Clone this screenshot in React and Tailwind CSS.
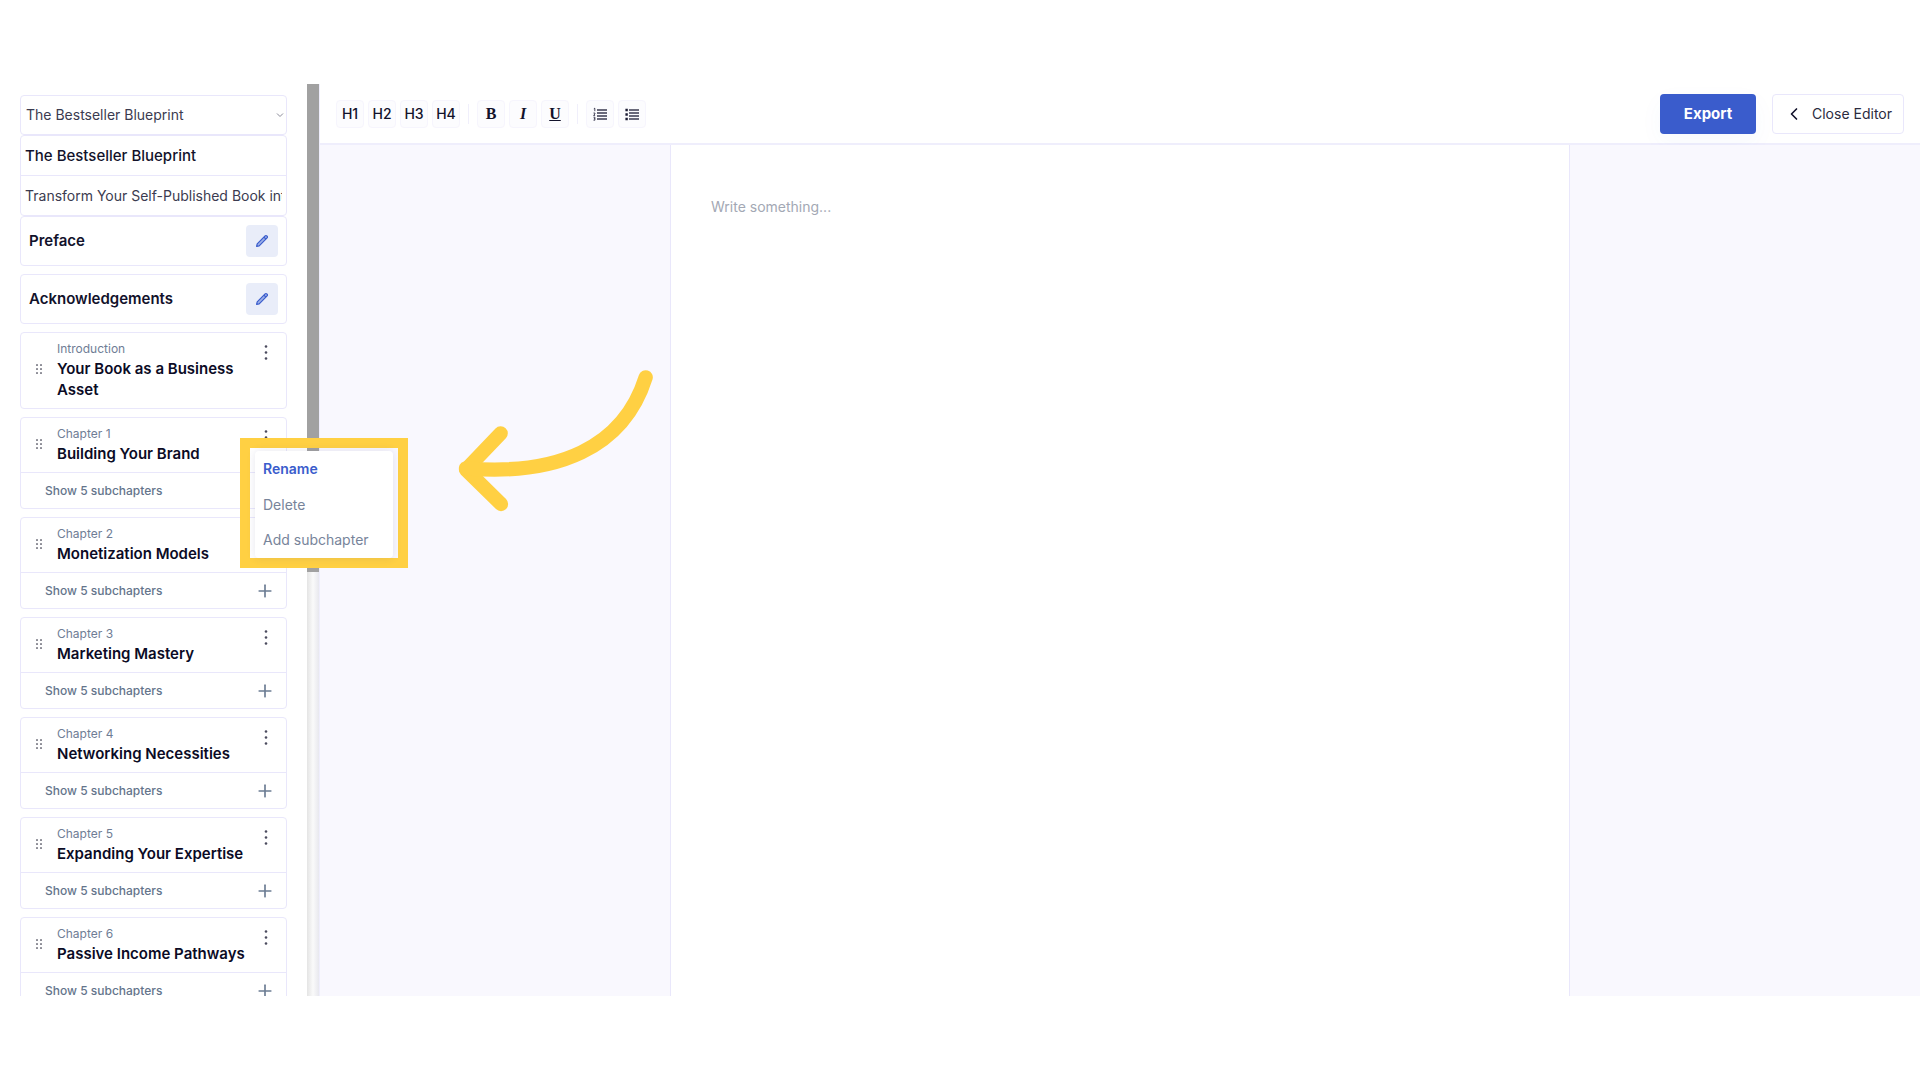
import React from 'react';
import { ChevronLeft, Plus } from 'lucide-react';

const headings = ['H1', 'H2', 'H3', 'H4'];

const chapters = [
  { label: 'Introduction', title: 'Your Book as a Business Asset' },
  { label: 'Chapter 1', title: 'Building Your Brand', subchapters: 5 },
  { label: 'Chapter 2', title: 'Monetization Models', subchapters: 5 },
  { label: 'Chapter 3', title: 'Marketing Mastery', subchapters: 5 },
  { label: 'Chapter 4', title: 'Networking Necessities', subchapters: 5 },
  { label: 'Chapter 5', title: 'Expanding Your Expertise', subchapters: 5 },
  { label: 'Chapter 6', title: 'Passive Income Pathways', subchapters: 5 },
];

const GripIcon = () => (
  <svg width="8" height="12" viewBox="0 0 8 12" fill="#85858f" aria-hidden="true">
    {[0, 4, 8].map((y) => (
      <React.Fragment key={y}>
        <rect x="1" y={y} width="2" height="2" rx="0.4" />
        <rect x="5" y={y} width="2" height="2" rx="0.4" />
      </React.Fragment>
    ))}
  </svg>
);

const DotsIcon = () => (
  <svg width="4" height="18" viewBox="0 0 4 18" fill="#4b4b5e" aria-hidden="true">
    <circle cx="2" cy="3.5" r="1.3" />
    <circle cx="2" cy="9.5" r="1.3" />
    <circle cx="2" cy="15.5" r="1.3" />
  </svg>
);

const PencilIcon = () => (
  <svg width="14" height="14" viewBox="0 0 14 14" fill="none" aria-hidden="true">
    <path
      d="M1.6 12.4l.6-2.6 7.9-7.9a1.2 1.2 0 0 1 1.7 0l.3.3a1.2 1.2 0 0 1 0 1.7l-7.9 7.9z"
      fill="#9db0e8"
      stroke="#3a5ccc"
      strokeWidth="1.2"
      strokeLinejoin="round"
    />
    <path d="M8.9 3.1l2 2" stroke="#3a5ccc" strokeWidth="1.2" />
  </svg>
);

const OrderedListIcon = () => (
  <svg width="14" height="14" viewBox="0 0 14 14" aria-hidden="true">
    <path d="M4 3h10M4 6h10M4 9h10M4 12h10" stroke="#3a3a50" strokeWidth="1.6" />
    <path d="M.8 1.8l1-.6v3M.5 6h1.4v1L.6 8.4h1.5M.5 10.2h1.4v3H.5M.9 11.7h1" fill="none" stroke="#1b1b33" strokeWidth="0.8" />
  </svg>
);

const BulletListIcon = () => (
  <svg width="14" height="14" viewBox="0 0 14 14" aria-hidden="true">
    <path d="M4 3h10M4 6h10M4 9h10M4 12h10" stroke="#3a3a50" strokeWidth="1.6" />
    <path d="M.4 3h2.4M.4 7.5h2.4M.4 12h2.4" stroke="#1b1b33" strokeWidth="2.4" />
  </svg>
);

const ToolButton = ({ label, children }) => (
  <button
    type="button"
    aria-label={label}
    className="flex h-7 w-7 items-center justify-center rounded border border-[#f6f5fd] bg-[#fcfcfe] text-sm font-medium text-[#12122b]"
  >
    {children}
  </button>
);

const Separator = () => <div className="mx-1 h-5 w-px bg-[#f0effb]" />;

const Toolbar = () => (
  <header className="flex h-[61px] shrink-0 items-center justify-between border-b-2 border-[#efeefc] bg-white px-4 pt-px">
    <div className="flex items-center gap-1">
      {headings.map((h) => (
        <ToolButton key={h} label={h}>{h}</ToolButton>
      ))}
      <Separator />
      <ToolButton label="Bold"><span className="font-['Liberation_Serif',serif] text-base font-bold">B</span></ToolButton>
      <ToolButton label="Italic"><span className="font-['Liberation_Serif',serif] text-base font-bold italic">I</span></ToolButton>
      <ToolButton label="Underline"><span className="font-['Liberation_Serif',serif] text-base font-bold underline">U</span></ToolButton>
      <Separator />
      <ToolButton label="Ordered list"><OrderedListIcon /></ToolButton>
      <ToolButton label="Bullet list"><BulletListIcon /></ToolButton>
    </div>
    <div className="flex items-center gap-4">
      <button
        type="button"
        className="h-10 w-24 rounded bg-[#3a5ccc] text-[15px] font-bold text-white shadow-[0_8px_24px_rgba(58,92,204,0.04)]"
      >
        Export
      </button>
      <button
        type="button"
        className="flex h-10 w-[132px] items-center justify-center gap-2 rounded border border-[#e9e7fb] bg-white text-sm text-[#2b2b40]"
      >
        <ChevronLeft className="h-5 w-5 text-[#12122b]" strokeWidth={2} />
        Close Editor
      </button>
    </div>
  </header>
);

const SectionCard = ({ title }) => (
  <div className="flex h-[50px] items-center justify-between rounded border border-[#e9e7fb] px-2">
    <h3 className="text-[15px] font-semibold text-[#12122b]">{title}</h3>
    <button
      type="button"
      aria-label={`Edit ${title}`}
      className="flex h-8 w-8 items-center justify-center rounded bg-[#e9edf9]"
    >
      <PencilIcon />
    </button>
  </div>
);

const ChapterCard = ({ chapter }) => (
  <div className="rounded border border-[#e9e7fb]">
    <div className="flex pt-[7px] pr-4 pb-2 pl-[14px]">
      <div className="flex w-[22px] shrink-0 items-center">
        <GripIcon />
      </div>
      <div className="min-w-0 flex-1">
        <p className="text-xs leading-[18px] text-[#6f7d95]">{chapter.label}</p>
        <h3 className="text-[15px] leading-[21px] font-semibold text-[#0b0b25]">{chapter.title}</h3>
      </div>
      <button type="button" aria-label={`Options for ${chapter.title}`} className="flex h-6 w-3 shrink-0 items-center justify-end pr-[2px]">
        <DotsIcon />
      </button>
    </div>
    {chapter.subchapters && (
      <div className="flex h-9 items-center justify-between border-t border-[#e9e7fb] pr-[11px] pl-6">
        <button type="button" className="text-xs font-medium text-[#64748b]">
          Show {chapter.subchapters} subchapters
        </button>
        <button type="button" aria-label="Add subchapter">
          <Plus className="h-5 w-5 text-[#6b7c93]" strokeWidth={2} />
        </button>
      </div>
    )}
  </div>
);

const Sidebar = () => (
  <aside className="flex w-80 shrink-0">
    <div className="flex-1 overflow-hidden bg-white px-5 pt-[11px]">
      <div className="relative">
        <select
          aria-label="Book"
          className="block h-10 w-full appearance-none rounded border border-[#e9e7fb] bg-white pl-[5px] text-sm text-[#3b3b50]"
        >
          <option>The Bestseller Blueprint</option>
        </select>
        <svg className="pointer-events-none absolute top-4 right-[3px] h-2 w-2" viewBox="0 0 8 8" fill="none" stroke="#8b8b99" aria-hidden="true">
          <path d="M1 2.5l3 3 3-3" />
        </svg>
      </div>
      <div className="rounded border border-[#e9e7fb]">
        <input
          aria-label="Title"
          defaultValue="The Bestseller Blueprint"
          className="block h-10 w-full rounded-t border-b border-[#e9e7fb] px-1 text-[15px] font-medium text-[#12122b] outline-none"
        />
        <input
          aria-label="Subtitle"
          defaultValue="Transform Your Self-Published Book into a Business"
          className="block h-[39px] w-full px-1 text-sm text-[#3b3b50] outline-none"
        />
      </div>
      <div className="flex flex-col gap-2">
        <SectionCard title="Preface" />
        <SectionCard title="Acknowledgements" />
        {chapters.map((c) => (
          <ChapterCard key={c.label} chapter={c} />
        ))}
      </div>
    </div>
    <div className="w-3 bg-linear-to-r from-[#e4e4e4] via-[#fafafa] to-[#e8e8ee]">
      <div className="h-[488px] bg-[#a1a1a1]" />
    </div>
    <div className="w-px bg-[#efeefc]" />
  </aside>
);

const ChapterMenu = () => (
  <div className="absolute top-[354px] left-60 h-[130px] w-[168px] border-[10px] border-[#ffd043] px-[5px] pt-[3px]">
    <div className="flex h-[107px] flex-col justify-between rounded bg-white p-2 text-sm shadow-[0_0_8px_rgba(60,60,120,0.12)]">
      <button type="button" className="text-left font-semibold text-[#3a5ccc]">Rename</button>
      <button type="button" className="text-left text-[#77849a]">Delete</button>
      <button type="button" className="text-left text-[#77849a]">Add subchapter</button>
    </div>
  </div>
);

const Arrow = () => (
  <svg
    className="pointer-events-none absolute top-[266px] left-[440px] h-[180px] w-[230px]"
    viewBox="0 0 690 540"
    fill="none"
    stroke="#ffd043"
    strokeWidth="43"
    strokeLinecap="round"
    strokeLinejoin="round"
    aria-hidden="true"
  >
    <path d="M182 250L78 359l105 103" />
    <path d="M78 355C350 378 550 295 617 82" />
  </svg>
);

const App = () => (
  <div className="h-screen bg-white py-[84px] font-[Inter,sans-serif]">
    <div className="relative flex h-full overflow-hidden">
      <Sidebar />
      <main className="flex min-w-0 flex-1 flex-col">
        <Toolbar />
        <div className="flex min-h-0 flex-1 justify-center bg-[#f9f8fe]">
          <textarea
            aria-label="Chapter text"
            placeholder="Write something..."
            className="block w-full max-w-[900px] resize-none border-x border-[#e9e7fb] bg-white px-10 py-[52px] text-sm text-[#12122b] outline-none placeholder:text-[#a3a8b4]"
          />
        </div>
      </main>
      <ChapterMenu />
      <Arrow />
    </div>
  </div>
);

export default App;
